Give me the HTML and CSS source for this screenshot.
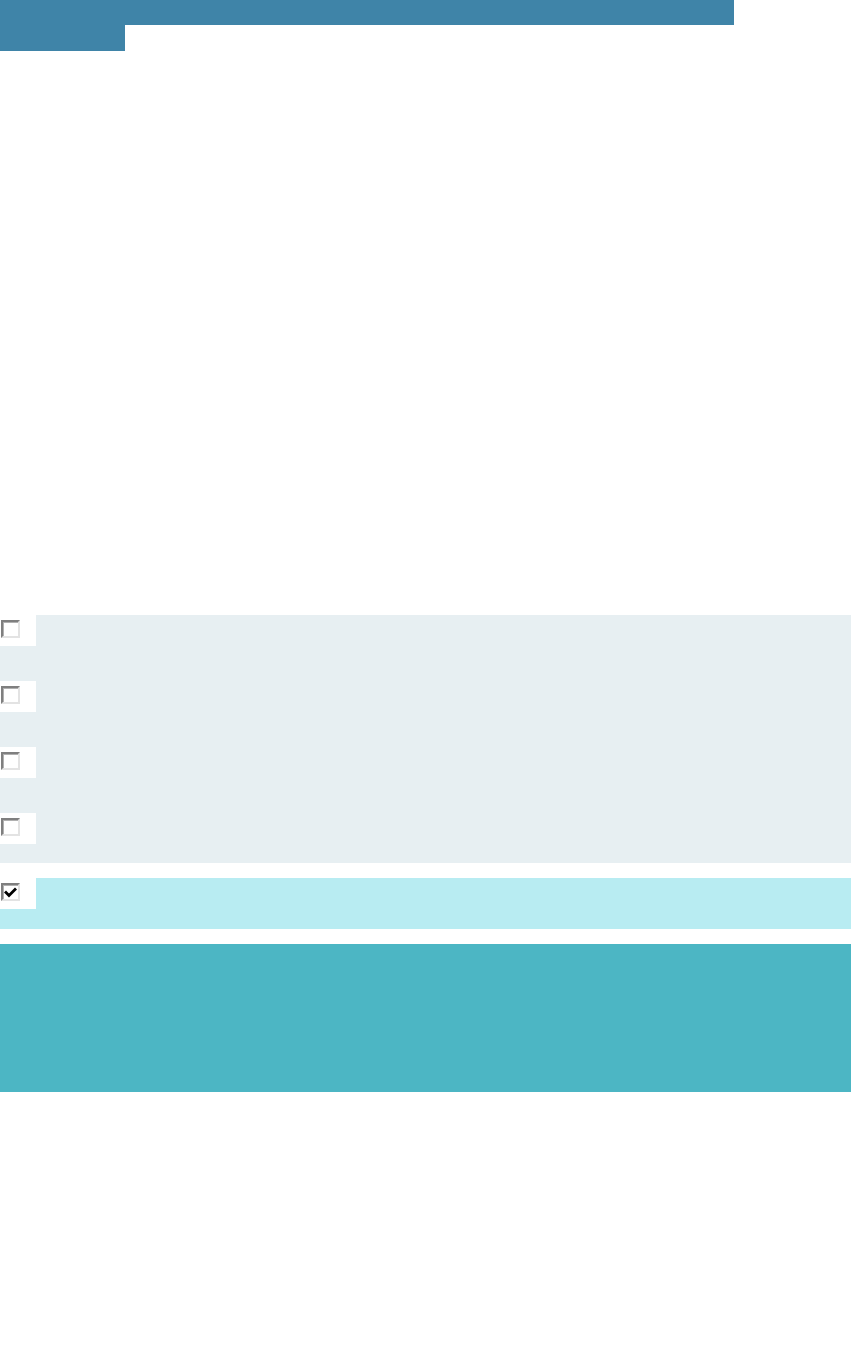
FILE: index.html
```html
<!DOCTYPE html>
<html>
<head>
<meta charset="utf-8">
<link rel="stylesheet" href="styles.css">
</head>
<body>
<header class="top">
  <div class="bar-wide"></div>
  <div class="bar-short"></div>
</header>
<main class="content">
  <section class="list">
    <div class="item"><div class="box"><span class="cb"></span></div></div>
    <div class="item"><div class="box"><span class="cb"></span></div></div>
    <div class="item"><div class="box"><span class="cb"></span></div></div>
    <div class="item"><div class="box"><span class="cb"></span></div></div>
  </section>
  <section class="selected">
    <div class="box"><span class="cb checked"><svg class="tick" width="15" height="14" viewBox="0 0 15 14"><path d="M3 7.5 L6 10.5 L12 4.5" fill="none" stroke="#000" stroke-width="2.8" stroke-linecap="square"/></svg></span></div>
  </section>
  <section class="panel"></section>
</main>
</body>
</html>
```
FILE: styles.css
```css
html, body {
  margin: 0;
  padding: 0;
  background: #ffffff;
  font-family: "Liberation Sans", Arial, sans-serif;
}
.top {
  display: flex;
  flex-direction: column;
}
.bar-wide {
  width: 734px;
  height: 25px;
  background: #3f84a8;
}
.bar-short {
  width: 125px;
  height: 26px;
  background: #3f84a8;
}
.content {
  padding-top: 564px;
  display: flex;
  flex-direction: column;
  gap: 15px;
}
.list {
  background: #e7eff2;
  display: flex;
  flex-direction: column;
  gap: 16px;
}
.item {
  height: 50px;
}
.box {
  width: 36px;
  height: 31px;
  background: #ffffff;
  box-sizing: border-box;
  padding: 5px 0 0 1px;
}
.cb {
  display: block;
  width: 19px;
  height: 18px;
  box-sizing: border-box;
  background: #ffffff;
  border-top: 2px solid #7f7f7f;
  border-left: 2px solid #7f7f7f;
  border-right: 2px solid #e3e3e3;
  border-bottom: 2px solid #e3e3e3;
  box-shadow: inset 1px 1px 0 #b0b0b0;
}
.tick {
  display: block;
}
.selected {
  height: 51px;
  background: #b8ecf2;
}
.panel {
  height: 148px;
  background: #4cb6c4;
}
```
